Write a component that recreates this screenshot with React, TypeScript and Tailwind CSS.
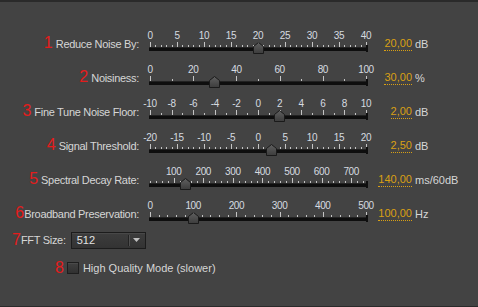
import React from "react";

type SliderDef = {
  n: string;
  label: string;
  min: number;
  max: number;
  tickStep: number;
  labels: number[];
  value: number;
  display: string;
  unit: string;
  numGap: string;
};

const range = (a: number, b: number, s: number) => {
  const out: number[] = [];
  for (let v = a; v <= b + 1e-9; v += s) out.push(Math.round(v * 1000) / 1000);
  return out;
};

const sliders: SliderDef[] = [
  { n: "1", label: "Reduce Noise By:", min: 0, max: 40, tickStep: 1, labels: range(0, 40, 5), value: 20, display: "20,00", unit: "dB", numGap: "mr-[3px]" },
  { n: "2", label: "Noisiness:", min: 0, max: 100, tickStep: 10, labels: range(0, 100, 20), value: 30, display: "30,00", unit: "%", numGap: "mr-[3px]" },
  { n: "3", label: "Fine Tune Noise Floor:", min: -10, max: 10, tickStep: 1, labels: range(-10, 10, 2), value: 2, display: "2,00", unit: "dB", numGap: "mr-[3px]" },
  { n: "4", label: "Signal Threshold:", min: -20, max: 20, tickStep: 1, labels: range(-20, 20, 5), value: 2.5, display: "2,50", unit: "dB", numGap: "mr-[3px]" },
  { n: "5", label: "Spectral Decay Rate:", min: 20, max: 750, tickStep: 20, labels: range(100, 700, 100), value: 140, display: "140,00", unit: "ms/60dB", numGap: "mr-[3px]" },
  { n: "6", label: "Broadband Preservation:", min: 0, max: 500, tickStep: 20, labels: range(0, 500, 100), value: 100, display: "100,00", unit: "Hz", numGap: "mr-0" },
];

const W = 216;

function RedNum({ n }: { n: string }) {
  return (
    <span className="font-['Liberation_Sans_Narrow','Liberation_Sans',sans-serif] text-[16px] leading-none text-[#e41c1c]">
      {n}
    </span>
  );
}

function Thumb({ id }: { id: string }) {
  return (
    <svg width="11" height="12" viewBox="0 0 11 12">
      <defs>
        <linearGradient id={id} x1="0" y1="0" x2="0" y2="1">
          <stop offset="0" stopColor="#606060" />
          <stop offset="1" stopColor="#3c3c3c" />
        </linearGradient>
      </defs>
      <path d="M5.5 0.5 L10.5 4.5 L10.5 11.5 L0.5 11.5 L0.5 4.5 Z" fill={`url(#${id})`} stroke="#1a1a1a" strokeWidth="1" />
    </svg>
  );
}

function Slider({ s, idx }: { s: SliderDef; idx: number }) {
  const frac = (v: number) => (v - s.min) / (s.max - s.min);
  const ticks = range(s.min, s.max, s.tickStep);
  if (ticks[ticks.length - 1] < s.max) ticks.push(s.max);
  const isMajor = (v: number) => s.labels.some((l) => Math.abs(l - v) < 1e-6);
  return (
    <div className="relative w-[218px] h-[34px] flex flex-col pt-[3px]">
      <div className="relative h-[12px]">
        {s.labels.map((l) => (
          <span
            key={l}
            className="absolute top-0 -translate-x-1/2 text-[10px] leading-[12px] tracking-[-0.4px] text-[#d6dbe0] whitespace-nowrap"
            style={{ left: frac(l) * W + 1 }}
          >
            {l}
          </span>
        ))}
      </div>
      <div className="relative h-[5px]">
        {ticks.map((t) => (
          <div
            key={t}
            className={`absolute bottom-0 w-px bg-[#c4c4c4] ${isMajor(t) ? "h-[5px]" : "h-[2px]"}`}
            style={{ left: Math.round(frac(t) * W) + 1 }}
          />
        ))}
      </div>
      <div className="relative h-[4px] bg-[#0e0e0e] border-t border-[#222]">
        <div className="absolute right-[-1px] top-[-3px] w-[2px] h-[7px] bg-[#0e0e0e]" />
      </div>
      <div className="absolute top-[15px]" style={{ left: frac(s.value) * W + 1 - 5.5 }}>
        <Thumb id={`tg${idx}`} />
      </div>
    </div>
  );
}

export default function App() {
  return (
    <div className="w-[478px] h-[307px] box-border bg-[#434343] border-t-2 border-b border-[#2a2a2a] pt-[25px] flex flex-col font-['Liberation_Sans',Arial,sans-serif] text-[11px] text-[#d6d6d6]">
      {sliders.map((s, i) => (
        <div key={s.n} className="flex h-[34px] items-center">
          <div className="w-[139px] flex items-center justify-end">
            <span className={s.numGap}>
              <RedNum n={s.n} />
            </span>
            <span className="whitespace-nowrap tracking-[-0.3px]">{s.label}</span>
          </div>
          <div className="ml-[10px] self-stretch">
            <Slider s={s} idx={i} />
          </div>
          <div className="w-[45px] flex justify-end">
            <span className="leading-[13px] text-[#d9a014] border-b border-dotted border-[#d9a014]">{s.display}</span>
          </div>
          <span className="ml-[3px] text-[#d6d6d6]">{s.unit}</span>
        </div>
      ))}
      <div className="flex h-[18px] items-center pl-[12px]">
        <RedNum n="7" />
        <span className="whitespace-nowrap tracking-[-0.3px]">FFT Size:</span>
        <div className="ml-[5px] w-[75px] h-[17px] box-border border border-[#1c1c1c] bg-gradient-to-b from-[#3d3d3d] to-[#333333] shadow-[inset_0_1px_0_#484848] flex items-center">
          <span className="flex-1 pl-[5px] text-[#e2e2e2]">512</span>
          <div className="w-px h-[11px] bg-[#222] shadow-[1px_0_0_#505050]" />
          <div className="w-[16px] flex justify-center items-center">
            <svg width="7" height="4" viewBox="0 0 7 4">
              <path d="M0 0 H7 L3.5 4 Z" fill="#c0c0c0" />
            </svg>
          </div>
        </div>
      </div>
      <div className="flex h-[14px] items-center pl-[55px] mt-[12px]">
        <RedNum n="8" />
        <div className="ml-[3px] w-[12px] h-[12px] box-border border border-[#1e1e1e] bg-gradient-to-b from-[#404040] to-[#313131] shadow-[inset_0_1px_0_#4a4a4a]" />
        <span className="ml-[4px] whitespace-nowrap">High Quality Mode (slower)</span>
      </div>
    </div>
  );
}
